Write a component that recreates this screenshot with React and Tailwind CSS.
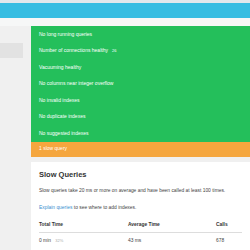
const checks = [
  'No long running queries',
  'Number of connections healthy',
  'Vacuuming healthy',
  'No columns near integer overflow',
  'No invalid indexes',
  'No duplicate indexes',
  'No suggested indexes',
];

export default function App() {
  return (
    <div className="w-[250px] h-[250px] overflow-hidden bg-[#f0f0f0]" style={{ fontFamily: '"Liberation Sans", Arial, sans-serif' }}>
      <div className="h-[3px] bg-[#e1e8ec]" />
      <div className="h-[15px] bg-[#36bde2]" />
      <div className="h-[8px] bg-[#f6f7f7]" />
      <div className="flex">
        <div className="w-[31px] shrink-0 pt-[17px]">
          <div className="h-[15px] w-[23px] bg-[#e2e2e2]" />
        </div>
        <div className="flex-1">
          <div className="bg-[#24bf5b]">
            {checks.map((c, i) => (
              <div key={c} className="h-[16.5px] px-[8px] flex items-center text-[5px] text-white">
                {c}
                {i === 1 && <span className="ml-[4px] text-[4px]">26</span>}
              </div>
            ))}
          </div>
          <div className="h-[15px] bg-[#f5a63e] px-[8px] flex items-center text-[5px] text-white">1 slow query</div>
          <div className="mt-[5px] bg-white px-[8px] pt-[9px] pb-[20px]">
            <h2 className="text-[7.5px] font-bold text-[#333] leading-none">Slow Queries</h2>
            <p className="mt-[9px] text-[4.9px] text-[#444] whitespace-nowrap">Slow queries take 20 ms or more on average and have been called at least 100 times.</p>
            <p className="mt-[10px] text-[4.9px] text-[#444] whitespace-nowrap"><span className="text-[#3b8fd0]">Explain queries</span> to see where to add indexes.</p>
            <div className="mt-[9px] grid grid-cols-[89px_88px_1fr] text-[4.9px] text-[#333] border-b border-[#ddd] pb-[4px] font-bold">
              <span>Total Time</span><span>Average Time</span><span>Calls</span>
            </div>
            <div className="grid grid-cols-[89px_88px_1fr] text-[4.9px] text-[#444] pt-[4px]">
              <span>0 min <span className="ml-[3px] text-[#aaa] text-[4px]">32%</span></span><span>43 ms</span><span>678</span>
            </div>
          </div>
        </div>
      </div>
    </div>
  );
}
